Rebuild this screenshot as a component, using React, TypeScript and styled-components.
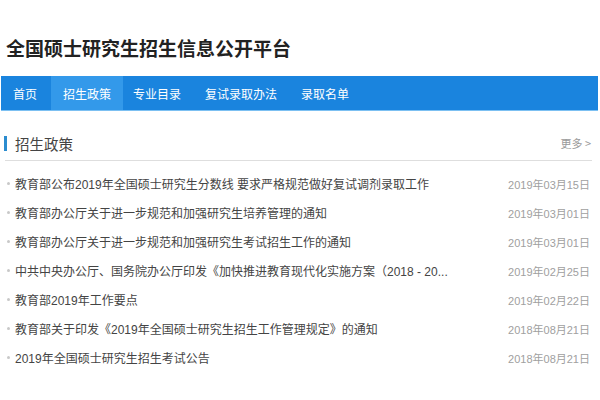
import React from "react";
import styled, { createGlobalStyle } from "styled-components";

const Global = createGlobalStyle`
  html, body { margin: 0; padding: 0; background: #ffffff; }
  body { font-family: "Liberation Sans", "Noto Sans CJK SC", sans-serif; }
  * { box-sizing: border-box; }
`;

const Page = styled.div`
  width: 600px;
  height: 400px;
  overflow: hidden;
  background: #fff;
  display: flex;
  flex-direction: column;
`;

const SiteTitle = styled.h1`
  margin: 34px 0 0 6px;
  font-family: "Noto Sans CJK SC", sans-serif;
  font-size: 19px;
  line-height: 28px;
  font-weight: 700;
  color: #222;
`;

const NavBar = styled.nav`
  margin: 14px 2px 0 1px;
  height: 34px;
  background: #1a84de;
  display: flex;
  align-items: stretch;
  box-shadow: 0 1px 0 #7cc0f2;
`;

const NavItem = styled.a<{ $active?: boolean }>`
  display: flex;
  align-items: center;
  padding: 0 12px;
  margin-right: ${(p) => (p.$active ? "-2px" : "0")};
  margin-left: ${(p) => (p.$active ? "2px" : "0")};
  font-family: "Noto Sans CJK SC", sans-serif;
  font-size: 12px;
  color: #ffffff;
  text-decoration: none;
  background: ${(p) => (p.$active ? "#3399ea" : "transparent")};
`;

const Section = styled.section`
  padding: 16px 8px 0 5px;
`;

const SectionHead = styled.div`
  height: 35px;
  border-bottom: 1px solid #dedede;
  display: flex;
  align-items: center;
  justify-content: space-between;
`;

const HeadTitle = styled.h2`
  margin: 0;
  display: flex;
  align-items: center;
  gap: 8px;
  font-family: "Noto Sans CJK SC", sans-serif;
  font-size: 14.5px;
  font-weight: 400;
  color: #444;
  &::before {
    content: "";
    display: block;
    width: 3px;
    height: 15px;
    background: #2b8ccf;
    margin-left: -1px;
  }
`;

const More = styled.a`
  font-family: "Noto Sans CJK SC", sans-serif;
  font-size: 11px;
  color: #9a9a9a;
  text-decoration: none;
  margin-right: 1px;
`;

const List = styled.ul`
  list-style: none;
  margin: 8px 0 0 0;
  padding: 0;
`;

const Row = styled.li`
  height: 29px;
  display: flex;
  align-items: center;
  justify-content: space-between;
  padding: 0 2px 0 0;
`;

const RowTitle = styled.a`
  display: flex;
  align-items: center;
  gap: 5px;
  font-size: 12px;
  color: #444;
  text-decoration: none;
  white-space: nowrap;
  &::before {
    content: "";
    display: block;
    width: 3px;
    height: 3px;
    border-radius: 50%;
    background: #c8c8c8;
    margin-left: 2px;
  }
`;

const RowDate = styled.span`
  font-size: 11px;
  color: #a0a0a0;
  white-space: nowrap;
`;

const navItems = ["首页", "招生政策", "专业目录", "复试录取办法", "录取名单"];

const items: [string, string][] = [
  ["教育部公布2019年全国硕士研究生分数线 要求严格规范做好复试调剂录取工作", "2019年03月15日"],
  ["教育部办公厅关于进一步规范和加强研究生培养管理的通知", "2019年03月01日"],
  ["教育部办公厅关于进一步规范和加强研究生考试招生工作的通知", "2019年03月01日"],
  ["中共中央办公厅、国务院办公厅印发《加快推进教育现代化实施方案（2018 - 20...", "2019年02月25日"],
  ["教育部2019年工作要点", "2019年02月22日"],
  ["教育部关于印发《2019年全国硕士研究生招生工作管理规定》的通知", "2018年08月21日"],
  ["2019年全国硕士研究生招生考试公告", "2018年08月21日"],
];

export default function App() {
  return (
    <>
      <Global />
      <Page>
        <SiteTitle>全国硕士研究生招生信息公开平台</SiteTitle>
        <NavBar>
          {navItems.map((n) => (
            <NavItem key={n} $active={n === "招生政策"}>
              {n}
            </NavItem>
          ))}
        </NavBar>
        <Section>
          <SectionHead>
            <HeadTitle>招生政策</HeadTitle>
            <More>更多 &gt;</More>
          </SectionHead>
          <List>
            {items.map(([t, d]) => (
              <Row key={t}>
                <RowTitle>{t}</RowTitle>
                <RowDate>{d}</RowDate>
              </Row>
            ))}
          </List>
        </Section>
      </Page>
    </>
  );
}
